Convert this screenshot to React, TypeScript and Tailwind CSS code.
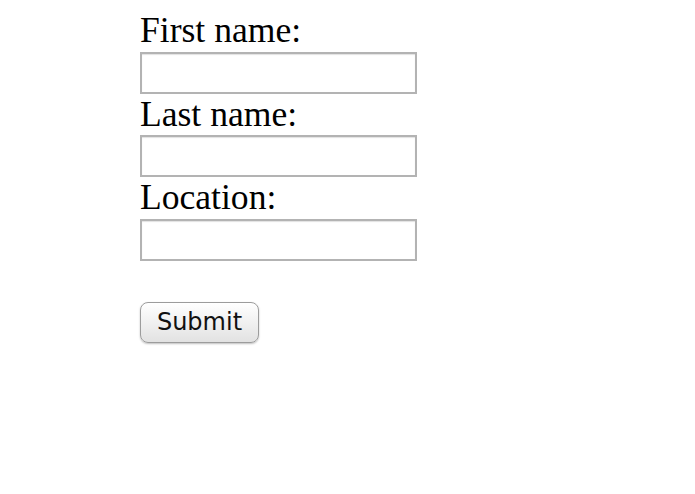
import React from 'react'

/**
 * Simple name / location form
 */
export default function App() {
  return (
    <div className="min-h-screen bg-white pl-[140px] pt-[10px]">
      <form
        className="flex flex-col items-start text-black"
        style={{ fontFamily: '"Liberation Serif", "Times New Roman", serif' }}
        onSubmit={(e) => e.preventDefault()}
      >
        {/* First name */}
        <label className="block text-[35.6px] leading-[41.5px]">First name:</label>
        <input
          type="text"
          className="block h-[42px] w-[277px] border-2 border-[#b3b3b3] bg-white shadow-[inset_0_1px_1px_rgba(0,0,0,0.12)] outline-none"
        />

        {/* Last name */}
        <label className="block text-[35.6px] leading-[41.5px]">Last name:</label>
        <input
          type="text"
          className="block h-[42px] w-[277px] border-2 border-[#b3b3b3] bg-white shadow-[inset_0_1px_1px_rgba(0,0,0,0.12)] outline-none"
        />

        {/* Location */}
        <label className="block text-[35.6px] leading-[41.5px]">Location:</label>
        <input
          type="text"
          className="block h-[42px] w-[277px] border-2 border-[#b3b3b3] bg-white shadow-[inset_0_1px_1px_rgba(0,0,0,0.12)] outline-none"
        />

        <div className="h-[41px]" />

        <button
          type="submit"
          className="flex h-[41px] w-[119px] items-center justify-center rounded-[8px] border border-[#9c9c9c] bg-gradient-to-b from-white to-[#e2e2e2] text-[24px] text-[#111] shadow-[0_1px_2px_rgba(0,0,0,0.25)]"
          style={{ fontFamily: '"DejaVu Sans", "Noto Sans", sans-serif' }}
        >
          Submit
        </button>
      </form>
    </div>
  )
}
